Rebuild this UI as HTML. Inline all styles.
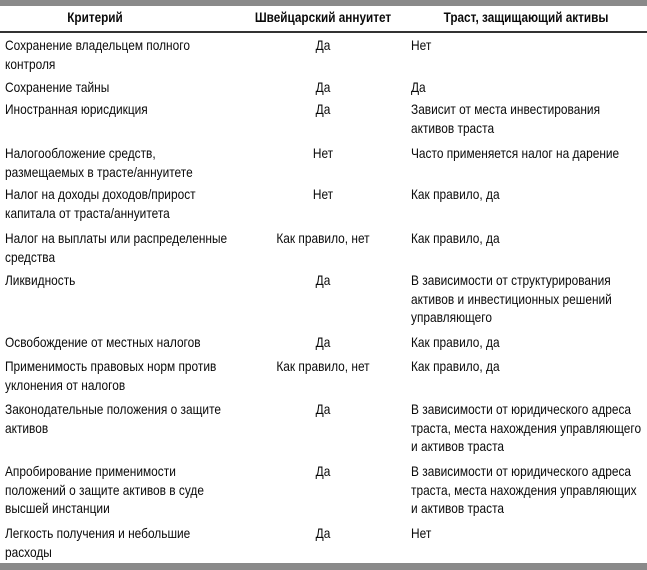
<!DOCTYPE html>
<html><head><meta charset="utf-8"><style>
body{margin:0;width:647px;height:570px;background:#fff;position:relative;overflow:hidden;font-family:"Liberation Sans",sans-serif;font-size:14px;color:#0a0a0a}
.bar{position:absolute;left:0;width:647px;background:#8a8a8a}
.r{position:absolute;left:0;width:647px;line-height:18.5px;white-space:nowrap}
.r div{transform:scaleX(0.85);transform-origin:left top}
.c1{position:absolute;left:5px;width:270px}
.c2{position:absolute;left:263px;width:120px;text-align:center;transform-origin:center top!important}
.c3{position:absolute;left:411px;width:270px}
.h{font-weight:bold}
.h div{transform:scaleX(0.84)}
.h .c1{left:0;width:190px;text-align:center;transform-origin:center top}
.h .c2{left:238px;width:170px}
.h .c3{left:405px;width:242px;text-align:center;transform-origin:center top}
</style></head><body>
<div class="bar" style="top:0;height:6px"></div>
<div class="r h" style="top:8px"><div class="c1">Критерий</div><div class="c2">Швейцарский аннуитет</div><div class="c3">Траст, защищающий активы</div></div>
<div class="bar" style="top:31px;height:2px;background:#333"></div>
<div class="r" style="top:36px"><div class="c1">Сохранение владельцем полного<br>контроля</div><div class="c2">Да</div><div class="c3">Нет</div></div>
<div class="r" style="top:78px"><div class="c1">Сохранение тайны</div><div class="c2">Да</div><div class="c3">Да</div></div>
<div class="r" style="top:100px"><div class="c1">Иностранная юрисдикция</div><div class="c2">Да</div><div class="c3">Зависит от места инвестирования<br>активов траста</div></div>
<div class="r" style="top:144px"><div class="c1">Налогообложение средств,<br>размещаемых в трасте/аннуитете</div><div class="c2">Нет</div><div class="c3">Часто применяется налог на дарение</div></div>
<div class="r" style="top:185px"><div class="c1">Налог на доходы доходов/прирост<br>капитала от траста/аннуитета</div><div class="c2">Нет</div><div class="c3">Как правило, да</div></div>
<div class="r" style="top:229px"><div class="c1">Налог на выплаты или распределенные<br>средства</div><div class="c2">Как правило, нет</div><div class="c3">Как правило, да</div></div>
<div class="r" style="top:271px"><div class="c1">Ликвидность</div><div class="c2">Да</div><div class="c3">В зависимости от структурирования<br>активов и инвестиционных решений<br>управляющего</div></div>
<div class="r" style="top:333px"><div class="c1">Освобождение от местных налогов</div><div class="c2">Да</div><div class="c3">Как правило, да</div></div>
<div class="r" style="top:357px"><div class="c1">Применимость правовых норм против<br>уклонения от налогов</div><div class="c2">Как правило, нет</div><div class="c3">Как правило, да</div></div>
<div class="r" style="top:400px"><div class="c1">Законодательные положения о защите<br>активов</div><div class="c2">Да</div><div class="c3">В зависимости от юридического адреса<br>траста, места нахождения управляющего<br>и активов траста</div></div>
<div class="r" style="top:462px"><div class="c1">Апробирование применимости<br>положений о защите активов в суде<br>высшей инстанции</div><div class="c2">Да</div><div class="c3">В зависимости от юридического адреса<br>траста, места нахождения управляющих<br>и активов траста</div></div>
<div class="r" style="top:524px"><div class="c1">Легкость получения и небольшие<br>расходы</div><div class="c2">Да</div><div class="c3">Нет</div></div>
<div class="bar" style="top:563px;height:7px"></div>
</body></html>
